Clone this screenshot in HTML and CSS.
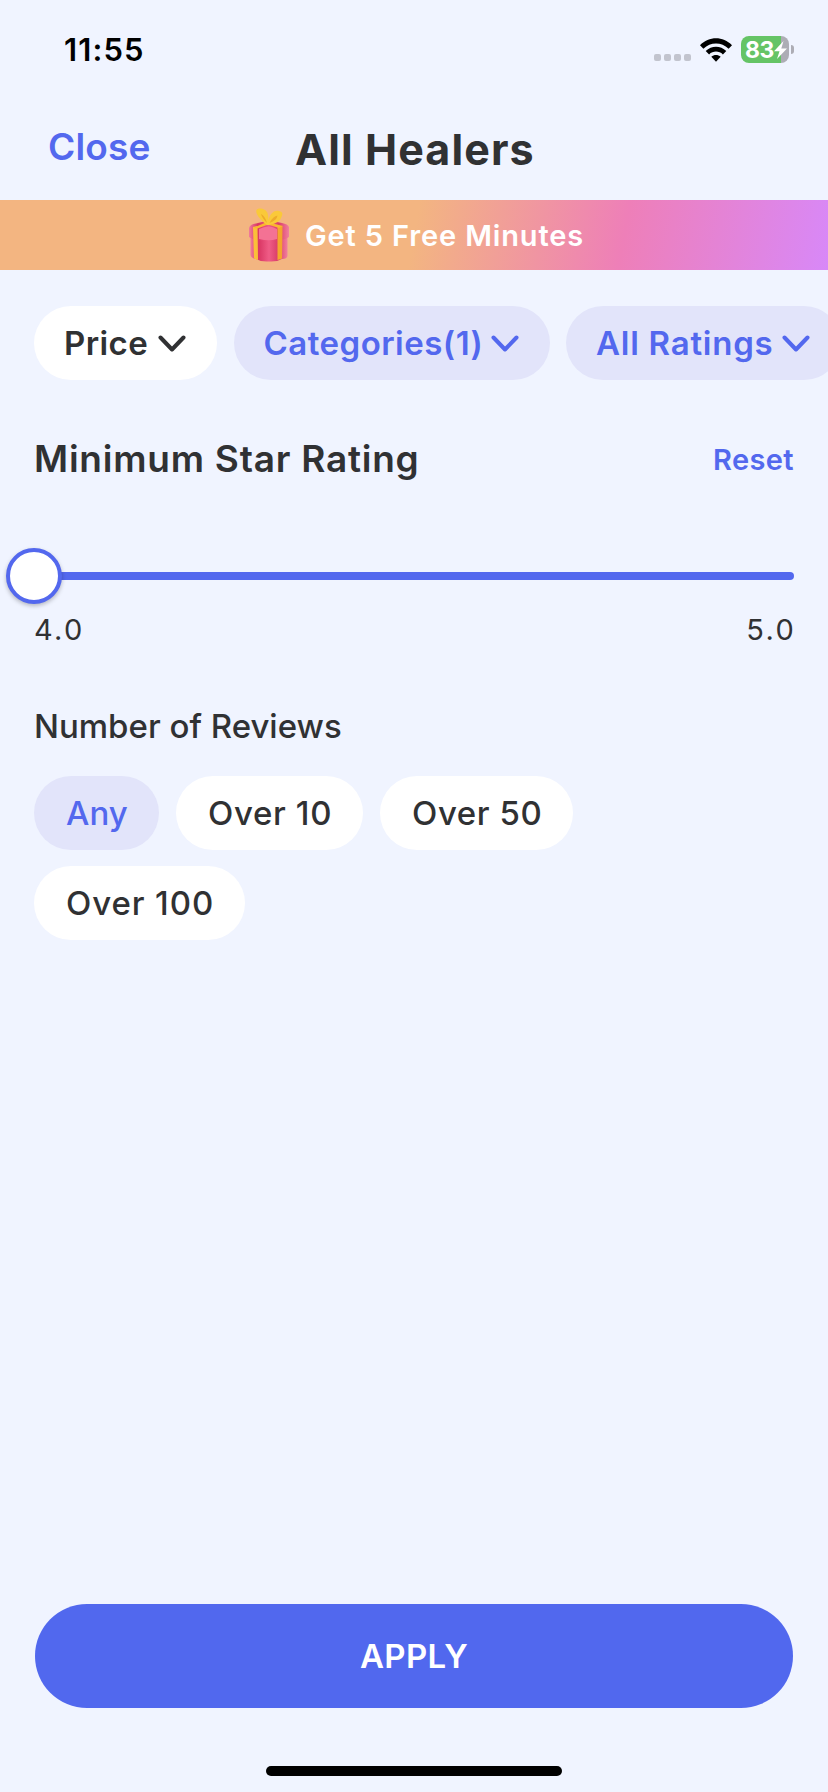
FILE: index.html
```html
<!DOCTYPE html>
<html lang="en">
<head>
<meta charset="utf-8">
<title>All Healers</title>
<link rel="stylesheet" href="styles.css">
</head>
<body>
<div class="screen">
  <header class="status">
    <span class="time">11:55</span>
    <div class="indicators">
      <div class="dots"><i></i><i></i><i></i><i></i></div>
      <svg class="wifi" width="32" height="24" viewBox="0 0 32 24">
        <path d="M0 7.2C9-2 23-2 32 7.2L28.6 10.8C21.5 3.7 10.500 3.700 3.400 10.800Z"/>
        <path d="M5.700 13C11.500 7.200 20.500 7.200 26.300 13L22.900 16.400C19 12.600 13 12.600 9.100 16.400Z"/>
        <path d="M11.300 18.800C14 16.500 18 16.500 20.700 18.800L16 23.700Z"/>
      </svg>
      <div class="battery">
        <span class="level">83</span>
        <svg class="bolt" width="13" height="18" viewBox="0 0 13 18"><path d="M9.500 0L0 10.200H5.500L3 18L13 7.500H7.300Z"/></svg>
      </div>
      <i class="cap"></i>
    </div>
  </header>
  <nav class="nav">
    <a class="close">Close</a>
    <h1 class="title">All Healers</h1>
  </nav>
  <div class="banner">
    <svg class="gift" width="40" height="54" viewBox="0 0 40 54">
      <defs>
        <linearGradient id="box" x1="0" x2="1" y1="0" y2="0">
          <stop offset="0" stop-color="#f07c9b"/><stop offset=".22" stop-color="#d93663"/><stop offset=".5" stop-color="#ef5c86"/><stop offset=".74" stop-color="#da3d69"/><stop offset="1" stop-color="#f17f9d"/>
        </linearGradient>
        <linearGradient id="rib" x1="0" x2="1" y1="0" y2="0">
          <stop offset="0" stop-color="#fbc13a"/><stop offset="1" stop-color="#f3a32c"/>
        </linearGradient>
      </defs>
      <path fill="url(#box)" d="M1.500 28H38.500V48Q38 51 33 51Q28 54 20 53.500Q12 54 7 51Q2 50 1.500 47Z"/>
      <path fill="url(#box)" d="M0 20Q1 16 7 15.500Q20 11.500 33 15Q39 16 40 19V29Q35 33 20 33Q5 33 0 29Z"/>
      <path fill="#f47294" d="M10 21Q20 16 28 21V31Q20 33.500 10 31Z"/>
      <path fill="url(#rib)" d="M4 19L8.500 18L9 52L5 50.500ZM28.500 18L33.500 18L33 50.500L28.500 52Z"/>
      <path fill="#f9b630" d="M4 20L18 14L34 18L30 20L19 16.500L8.500 20.500Z"/>
      <path fill="#fac939" d="M18 17C11 12 6 5 7.500 2C10-1 17 1 18.500 5Q20 10 19 15C20 7 24 2 30 3Q35 4 32.500 9Q31 15 20 17Z"/>
      <path fill="#edab2b" d="M18 15Q13 10 12 6Q16 8 18 15ZM20.500 15Q24 8 28.500 7.500Q28 12 20.500 15Z"/>
    </svg>
    <span class="promo">Get 5 Free Minutes</span>
  </div>
  <div class="filters">
    <div class="filter"><span class="t-price">Price</span><svg class="chev" width="28" height="18" viewBox="0 0 28 18"><path d="M2.500 2.500L14 14.500L25.500 2.500"/></svg></div>
    <div class="filter on"><span class="t-cat">Categories(1)</span><svg class="chev" width="28" height="18" viewBox="0 0 28 18"><path d="M2.500 2.500L14 14.500L25.500 2.500"/></svg></div>
    <div class="filter on"><span class="t-rat">All Ratings</span><svg class="chev" width="28" height="18" viewBox="0 0 28 18"><path d="M2.500 2.500L14 14.500L25.500 2.500"/></svg></div>
  </div>
  <main class="content">
    <div class="heading"><h2 class="h-rating">Minimum Star Rating</h2><a class="reset">Reset</a></div>
    <div class="slider"><div class="track"></div><div class="thumb"></div></div>
    <div class="range"><span>4.0</span><span>5.0</span></div>
    <h3 class="h-reviews">Number of Reviews</h3>
    <div class="chips">
      <span class="chip c-any">Any</span><span class="chip c-10">Over 10</span><span class="chip c-50">Over 50</span><span class="chip c-100">Over 100</span>
    </div>
  </main>
  <footer class="footer">
    <button class="apply">APPLY</button>
    <div class="home"></div>
  </footer>
</div>
</body>
</html>
```
FILE: styles.css
```css
* { box-sizing: border-box; }
body { margin: 0; background: #f0f4ff; font-family: Inter, "Liberation Sans", sans-serif; color: #303133; }
h1, h2, h3 { margin: 0; }
.screen { width: 828px; height: 1792px; overflow: hidden; display: flex; flex-direction: column; white-space: nowrap; }
.status { height: 100px; padding: 0 34px 0 64px; display: flex; justify-content: space-between; }
.time { margin-top: 30px; height: 40px; line-height: 40px; font-size: 31px; font-weight: 600; letter-spacing: 1.1px; color: #000; }
.indicators { height: 27px; margin-top: 36px; display: flex; align-items: center; }
.dots { display: flex; gap: 3px; margin: 16px 9px 0 0; }
.dots i { width: 7px; height: 7px; border-radius: 2px; background: #c2c4ce; }
.wifi { margin-right: 9px; }
.battery { width: 48px; height: 27px; border-radius: 8px; background: linear-gradient(90deg, #65c466 40px, #adadb5 40px); display: flex; align-items: center; padding-left: 4px; }
.level { font-size: 23px; font-weight: 700; color: #fff; letter-spacing: -0.500px; }
.bolt { flex: none; fill: #fff; margin-left: 0; }
.cap { width: 3px; height: 9px; margin-left: 2px; border-radius: 0 4px 4px 0; background: #adadb5; }
.nav { height: 100px; display: grid; grid-template-columns: 295px 1fr; }
.close { padding-left: 48px; line-height: 94px; font-size: 37px; font-weight: 600; letter-spacing: 0.200px; color: #5368ee; }
.title { line-height: 99px; font-size: 43px; font-weight: 700; letter-spacing: 1.1px; }
.banner { height: 70px; padding-left: 249px; display: flex; align-items: center; background: linear-gradient(100deg, #f3b581 0%, #f3b581 50%, #ee7fb8 75%, #d888f8 100%); }
.gift { margin-right: 16px; }
.promo { font-size: 29px; font-weight: 600; letter-spacing: 0.850px; color: #fff; }
.filters { margin-top: 36px; padding-left: 34px; display: flex; gap: 16.500px; }
.filter { flex: none; height: 74px; padding: 0 31px 0 30px; border-radius: 37px; display: flex; align-items: center; justify-content: space-between; background: #fff; font-size: 33px; font-weight: 600; }
.filter:nth-child(1) { width: 183px; }
.filter:nth-child(2) { width: 316px; }
.filter:nth-child(3) { width: 275px; }
.filter.on { background: #e2e4fa; color: #5368ee; }
.t-price { letter-spacing: 0.400px; }
.t-cat { letter-spacing: 0.480px; }
.t-rat { letter-spacing: 0.750px; }
.chev { flex: none; margin-top: 2px; fill: none; stroke: currentColor; stroke-width: 4; stroke-linecap: round; stroke-linejoin: round; }
.content { flex: 1; padding: 0 34px; }
.heading { margin-top: 53px; height: 50px; display: flex; justify-content: space-between; align-items: center; }
.h-rating { font-size: 37px; font-weight: 600; letter-spacing: 0.760px; }
.reset { font-size: 29px; font-weight: 600; letter-spacing: 0.400px; margin-top: 2px; color: #5368ee; }
.slider { height: 56px; margin-top: 65px; position: relative; display: flex; align-items: center; }
.track { width: 100%; height: 8px; border-radius: 4px; background: #5368ee; }
.thumb { position: absolute; left: -28px; top: 0; width: 56px; height: 56px; border: 4px solid #5368ee; border-radius: 50%; background: #fff; box-shadow: 0 2px 4px rgba(0,0,0,.25); }
.range { height: 40px; line-height: 40px; margin: 6px -2px 0 0; display: flex; justify-content: space-between; font-size: 29px; letter-spacing: 2.300px; }
.h-reviews { height: 40px; line-height: 40px; margin-top: 56px; font-size: 33px; font-weight: 500; }
.chips { width: 620px; margin-top: 30px; display: flex; flex-wrap: wrap; gap: 16px 17px; }
.chip { height: 74px; border-radius: 37px; background: #fff; display: flex; align-items: center; padding-left: 32px; font-size: 33px; font-weight: 500; }
.c-any { width: 125px; background: #e2e4fa; color: #5368ee; }
.c-10 { width: 187px; letter-spacing: 0.650px; }
.c-50 { width: 193px; letter-spacing: 0.600px; }
.c-100 { width: 211px; letter-spacing: 0.900px; }
.footer { height: 188px; padding: 0 35px; display: flex; flex-direction: column; align-items: center; }
.apply { width: 758px; height: 104px; border: 0; border-radius: 52px; background: #5168ee; color: #fff; font: 600 33px Inter, sans-serif; letter-spacing: 0.300px; }
.home { width: 296px; height: 10px; margin-top: 58px; border-radius: 5px; background: #000; }
```
